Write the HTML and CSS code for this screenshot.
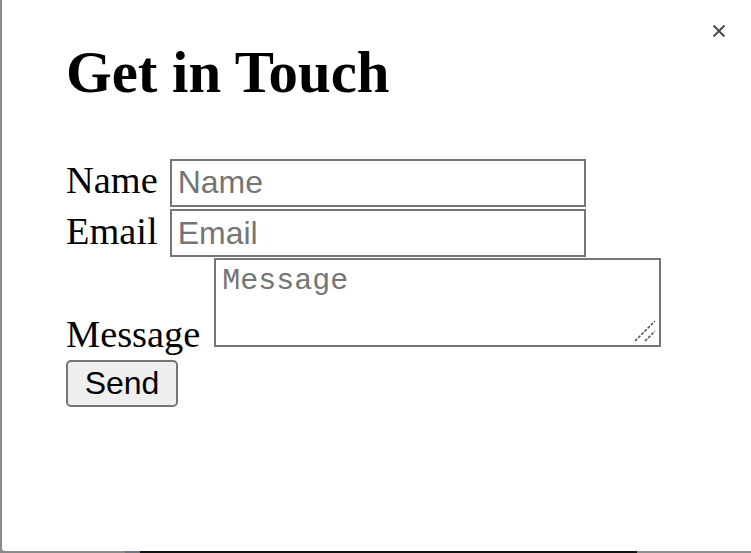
FILE: index.html
```html
<!DOCTYPE html>
<html lang="en">
<head>
<meta charset="utf-8">
<title>Get in Touch</title>
<link rel="stylesheet" href="styles.css">
</head>
<body>
<div class="modal">
  <button class="close" aria-label="Close">
    <svg width="14" height="14" viewBox="0 0 14 14"><path d="M1.5 1.5 L12.5 12.5 M12.5 1.5 L1.5 12.5" stroke="#444" stroke-width="1.8" fill="none"/></svg>
  </button>
  <div class="content">
    <h2 class="title">Get in Touch</h2>
    <form class="form">
      <div class="row"><label class="lbl">Name</label><input class="field" type="text" placeholder="Name"></div>
      <div class="row"><label class="lbl">Email</label><input class="field" type="email" placeholder="Email"></div>
      <div class="row row-msg"><label class="lbl lbl-msg">Message</label><span class="area-wrap"><textarea class="area" placeholder="Message"></textarea><svg class="grip" width="24" height="24" viewBox="0 0 24 24"><path d="M2 22 L22 2 M12 22 L22 12" stroke="#555" stroke-width="1.6" stroke-dasharray="3 1.5" fill="none"/></svg></span></div>
      <div class="actions"><button class="send" type="button">Send</button></div>
    </form>
  </div>
</div>
</body>
</html>
```
FILE: styles.css
```css
html, body {
  margin: 0;
  padding: 0;
}
body {
  width: 751px;
  height: 553px;
  overflow: hidden;
  background: linear-gradient(to right, #8a8a8a 0, #8a8a8a 125px, #6f7680 125px, #6f7680 140px, #111 140px, #111 637px, #8e8e8e 637px, #8e8e8e 751px);
}
.modal {
  position: relative;
  margin: 0 0 2px 2px;
  height: 551px;
  background: #fff;
  border-bottom-left-radius: 3px;
}
.close {
  position: absolute;
  top: 24px;
  left: 710px;
  width: 14px;
  height: 14px;
  padding: 0;
  border: 0;
  background: transparent;
  display: flex;
}
.content {
  padding: 40px 0 0 64px;
}
.title {
  margin: 0;
  font-family: "Liberation Serif", "Times New Roman", serif;
  font-weight: bold;
  font-size: 58.8px;
  line-height: 66px;
  color: #000;
}
.form {
  margin-top: 52px;
  display: flex;
  flex-direction: column;
  gap: 2px;
}
.row {
  display: flex;
  align-items: baseline;
  gap: 12px;
}
.lbl {
  font-family: "Liberation Serif", "Times New Roman", serif;
  font-size: 38.4px;
  color: #000;
}
.field {
  box-sizing: border-box;
  width: 416px;
  height: 48px;
  margin: 0;
  padding: 0 6px;
  border: 2px solid #767676;
  font-family: "Liberation Sans", Arial, sans-serif;
  font-size: 32px;
  color: #000;
  background: #fff;
}
.field::placeholder {
  color: #757575;
}
.row-msg {
  align-items: flex-end;
  margin-top: -1px;
}
.lbl-msg {
  line-height: 26px;
}
.area-wrap {
  position: relative;
  display: flex;
  margin-left: 2px;
}
.area {
  box-sizing: border-box;
  width: 447px;
  height: 89px;
  margin: 0;
  padding: 4px 6px;
  border: 2px solid #767676;
  font-family: "Liberation Mono", "DejaVu Sans Mono", monospace;
  font-size: 30px;
  color: #000;
  background: #fff;
  resize: none;
}
.area::placeholder {
  color: #757575;
}
.grip {
  position: absolute;
  right: 4px;
  bottom: 4px;
}
.actions {
  margin-top: 11px;
  display: flex;
}
.send {
  box-sizing: border-box;
  width: 112px;
  height: 47px;
  margin: 0;
  padding: 0;
  border: 2px solid #767676;
  border-radius: 5px;
  background: #efefef;
  font-family: "Liberation Sans", Arial, sans-serif;
  font-size: 32px;
  color: #000;
}
```
